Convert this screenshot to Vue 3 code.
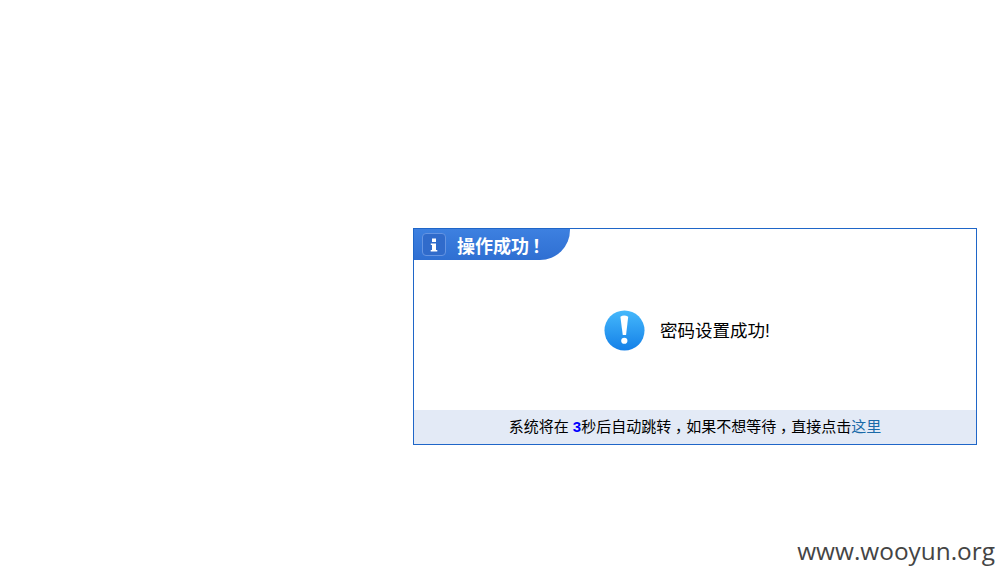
<script setup>
const seconds = 3
</script>

<template>
  <div class="page">
    <div class="box">
      <div class="head">
        <span class="info-icon">
          <svg width="16" height="16" viewBox="0 0 16 16">
            <rect x="6" y="1.5" width="4" height="3.5" fill="#fff" />
            <path d="M4.8 6.5H10v6.4h1.3v1.6H4.7v-1.6H6V8.1H4.8z" fill="#fff" />
          </svg>
        </span>
        <span class="head-title">操作成功<span class="bang">！</span></span>
      </div>
      <div class="body">
        <svg class="alert" width="41" height="41" viewBox="0 0 42 42">
          <defs>
            <linearGradient id="alertFill" x1="0" y1="0" x2="0" y2="1">
              <stop offset="0" stop-color="#45b8fb" />
              <stop offset="1" stop-color="#1480e8" />
            </linearGradient>
          </defs>
          <circle cx="21" cy="21" r="20.5" fill="url(#alertFill)" />
          <path d="M16.8 7q3.7-2.6 8 0L22.6 25.5h-3.4z" fill="#fff" />
          <circle cx="20.8" cy="31.5" r="3.2" fill="#fff" />
        </svg>
        <span class="msg">密码设置成功!</span>
      </div>
      <div class="foot">
        系统将在 <b class="count">{{ seconds }}</b>秒后自动跳转<span class="punct">，</span>如果不想等待<span class="punct">，</span>直接点击<a class="link" href="#">这里</a>
      </div>
    </div>
    <div class="mark">www.wooyun.org</div>
  </div>
</template>

<style>
html, body {
  margin: 0;
  background: #fff;
}
</style>

<style scoped>
.page {
  height: 581px;
  box-sizing: border-box;
  padding: 228px 26px 0 413px;
  position: relative;
  overflow: hidden;
  font-family: "Liberation Sans", "Noto Sans CJK SC", sans-serif;
  color: #000;
}

.box {
  width: 564px;
  height: 217px;
  box-sizing: border-box;
  border: 1px solid #1f66c8;
  display: flex;
  flex-direction: column;
}

.head {
  width: 156px;
  height: 31px;
  box-sizing: border-box;
  padding-left: 8px;
  display: flex;
  align-items: center;
  background: linear-gradient(#3d80e0, #2f6fd2);
  border-bottom-right-radius: 30px;
}

.info-icon {
  width: 24px;
  height: 23px;
  box-sizing: border-box;
  border: 1px solid #6494e2;
  border-radius: 4px;
  background: #306bcb;
  display: flex;
  align-items: center;
  justify-content: center;
}

.head-title {
  margin-left: 11px;
  color: #fff;
  font-size: 18px;
  font-weight: bold;
  white-space: nowrap;
}

.bang {
  margin-left: 3px;
}

.body {
  flex: 1;
  display: flex;
  align-items: center;
  justify-content: center;
  padding: 0 16px 10px 0;
}

.alert {
  flex: none;
}

.msg {
  margin: 0 0 2px 15px;
  font-size: 17.5px;
}

.foot {
  height: 34px;
  line-height: 34px;
  background: #e3eaf6;
  text-align: center;
  font-size: 15px;
}

.punct {
  font-feature-settings: "halt";
  padding: 0 3.75px;
}

.count {
  color: #0000ff;
}

.link {
  color: #1a6aa8;
  text-decoration: none;
}

.mark {
  position: absolute;
  right: 8px;
  bottom: 14px;
  font-family: "Open Sans", "DejaVu Sans", sans-serif;
  font-size: 24.4px;
  color: #444;
  white-space: nowrap;
}
</style>
